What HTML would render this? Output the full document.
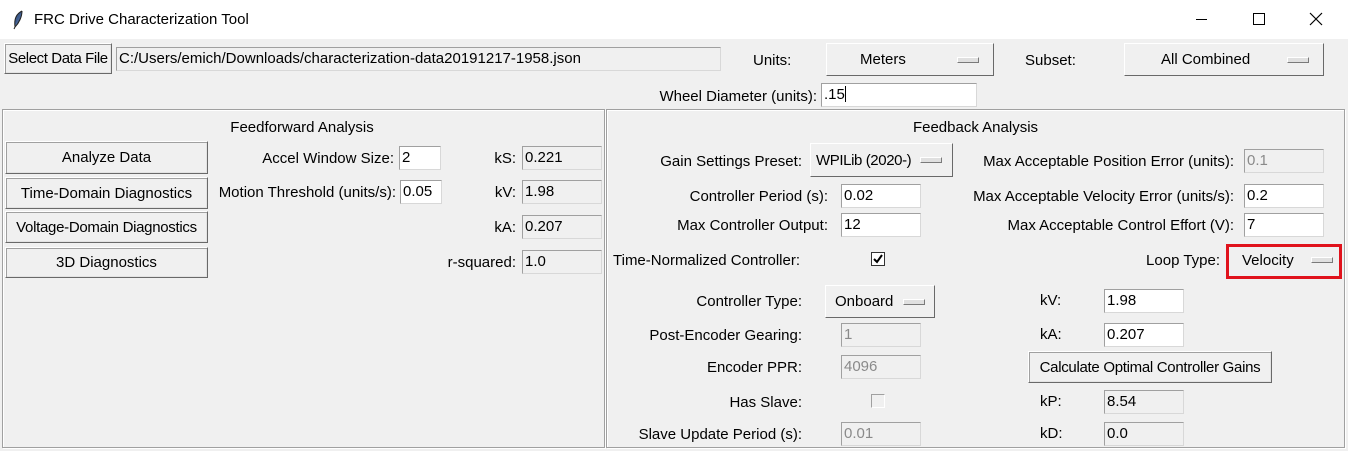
<!DOCTYPE html>
<html><head><meta charset="utf-8"><style>
*{box-sizing:border-box;margin:0;padding:0}
body{width:1348px;height:451px;background:#f0f0f0;font-family:"Liberation Sans",sans-serif;font-size:15px;color:#000;position:relative;overflow:hidden;letter-spacing:0}
.a{position:absolute;white-space:nowrap}
.r{position:absolute;white-space:nowrap;text-align:right;line-height:22px}
.e{position:absolute;background:#fff;border:1px solid #d8d8d8;border-top-color:#a0a0a0;border-left-color:#a0a0a0;line-height:22px;padding-left:2px;height:24px}
.d{background:#f0f0f0;color:#8a8a8a}
.b{position:absolute;background:#f0f0f0;border:1px solid;border-color:#fff #696969 #696969 #fff;box-shadow:1px 1px 0 #a0a0a0 inset, -1px -1px 0 #e3e3e3 inset;text-align:center}
.m{position:absolute;background:#f0f0f0;border:1px solid;border-color:#fff #696969 #696969 #fff;padding-left:12px}
.m i{position:absolute;right:14px;top:50%;width:22px;height:6px;margin-top:-3px;border:1px solid;border-color:#fff #7a7a7a #7a7a7a #fff;background:#e0e0e0}
.f{position:absolute;border:1px solid #a0a0a0;box-shadow:1px 1px 0 #fff inset,1px 1px 0 #fff}
.cb{position:absolute;width:14px;height:14px;background:#fff;border:1px solid #333}
</style></head><body>
<div class="a" style="left:0;top:0;width:1348px;height:39px;background:#fff"></div>
<svg class="a" style="left:12px;top:10px" width="12" height="20" viewBox="0 0 12 20"><path d="M10 1 C4 4 2 10 3 17 L2 19 M3 17 C7 13 10 7 10 1" fill="#3c5a8c" stroke="#222" stroke-width="1"/></svg>
<div class="a" style="left:34px;top:11px;font-size:15px">FRC Drive Characterization Tool</div>
<div class="a" style="left:1196px;top:19px;width:11px;height:1px;background:#000"></div>
<div class="a" style="left:1253px;top:13px;width:12px;height:12px;border:1px solid #000"></div>
<svg class="a" style="left:1309px;top:12px" width="14" height="14"><path d="M1 1L13 13M13 1L1 13" stroke="#000" stroke-width="1.2"/></svg>

<div class="b" style="left:4px;top:43px;width:108px;height:31px;line-height:30px;letter-spacing:-0.4px">Select Data File</div>
<div class="e d" style="left:116px;top:47px;width:605px;color:#000;background:#f0f0f0">C:/Users/emich/Downloads/characterization-data20191217-1958.json</div>
<div class="a" style="left:753px;top:52px">Units:</div>
<div class="m" style="left:826px;top:43px;width:168px;height:33px;line-height:32px;padding-left:33px">Meters<i></i></div>
<div class="a" style="left:1025px;top:52px">Subset:</div>
<div class="m" style="left:1124px;top:43px;width:200px;height:33px;line-height:32px;padding-left:36px">All Combined<i></i></div>
<div class="r" style="left:560px;width:257px;top:86px">Wheel Diameter (units):</div>
<div class="e" style="left:821px;top:83px;width:156px">.15<span style="display:inline-block;width:1px;height:16px;background:#000;vertical-align:-3px"></span></div>

<div class="f" style="left:2px;top:109px;width:603px;height:339px"></div>
<div class="f" style="left:606px;top:109px;width:739px;height:339px"></div>

<div class="a" style="left:0;width:604px;text-align:center;top:119px">Feedforward Analysis</div>
<div class="b" style="left:5px;top:141px;width:203px;height:33px;line-height:32px">Analyze Data</div>
<div class="b" style="left:5px;top:177px;width:203px;height:32px;line-height:31px">Time-Domain Diagnostics</div>
<div class="b" style="left:5px;top:211px;width:203px;height:32px;line-height:31px;letter-spacing:-0.3px">Voltage-Domain Diagnostics</div>
<div class="b" style="left:5px;top:247px;width:203px;height:31px;line-height:30px">3D Diagnostics</div>
<div class="r" style="left:200px;width:194px;top:148px">Accel Window Size:</div>
<div class="e" style="left:399px;top:146px;width:42px">2</div>
<div class="r" style="left:200px;width:196px;top:182px">Motion Threshold (units/s):</div>
<div class="e" style="left:400px;top:180px;width:42px">0.05</div>
<div class="r" style="left:440px;width:76px;top:148px">kS:</div>
<div class="e d" style="left:522px;top:146px;width:80px;color:#000">0.221</div>
<div class="r" style="left:440px;width:76px;top:182px">kV:</div>
<div class="e d" style="left:522px;top:180px;width:80px;color:#000">1.98</div>
<div class="r" style="left:440px;width:76px;top:217px">kA:</div>
<div class="e d" style="left:522px;top:215px;width:80px;color:#000">0.207</div>
<div class="r" style="left:400px;width:116px;top:252px">r-squared:</div>
<div class="e d" style="left:522px;top:250px;width:80px;color:#000">1.0</div>

<div class="a" style="left:606px;width:739px;text-align:center;top:119px">Feedback Analysis</div>
<div class="r" style="left:600px;width:202px;top:151px">Gain Settings Preset:</div>
<div class="m" style="left:810px;top:143px;width:143px;height:34px;line-height:33px;padding-left:5px;letter-spacing:-0.4px">WPILib (2020-)<i style="right:10px"></i></div>
<div class="r" style="left:900px;width:334px;top:151px">Max Acceptable Position Error (units):</div>
<div class="e d" style="left:1244px;top:149px;width:80px">0.1</div>
<div class="r" style="left:600px;width:228px;top:186px">Controller Period (s):</div>
<div class="e" style="left:841px;top:184px;width:80px">0.02</div>
<div class="r" style="left:900px;width:334px;top:186px">Max Acceptable Velocity Error (units/s):</div>
<div class="e" style="left:1244px;top:184px;width:80px">0.2</div>
<div class="r" style="left:600px;width:228px;top:215px">Max Controller Output:</div>
<div class="e" style="left:841px;top:213px;width:80px">12</div>
<div class="r" style="left:900px;width:334px;top:215px">Max Acceptable Control Effort (V):</div>
<div class="e" style="left:1244px;top:213px;width:80px">7</div>
<div class="a" style="left:613px;top:252px">Time-Normalized Controller:</div>
<div class="cb" style="left:871px;top:252px"><svg width="12" height="12" style="position:absolute;left:0;top:0"><path d="M2 6L5 9L10 2" stroke="#000" stroke-width="2" fill="none"/></svg></div>
<div class="r" style="left:1100px;width:120px;top:250px">Loop Type:</div>
<div class="a" style="left:1226px;top:244px;width:116px;height:35px;border:3px solid #e0121c"></div>
<div class="a" style="left:1242px;top:252px">Velocity</div>
<div class="a" style="left:1311px;top:257px;width:22px;height:6px;border:1px solid;border-color:#fff #7a7a7a #7a7a7a #fff;background:#e0e0e0"></div>

<div class="r" style="left:600px;width:202px;top:291px">Controller Type:</div>
<div class="m" style="left:825px;top:285px;width:110px;height:33px;line-height:32px;padding-left:9px">Onboard<i style="right:9px"></i></div>
<div class="a" style="left:1040px;top:292px">kV:</div>
<div class="e" style="left:1104px;top:289px;width:80px">1.98</div>
<div class="r" style="left:600px;width:202px;top:325px">Post-Encoder Gearing:</div>
<div class="e d" style="left:841px;top:323px;width:80px">1</div>
<div class="a" style="left:1040px;top:326px">kA:</div>
<div class="e" style="left:1104px;top:323px;width:80px">0.207</div>
<div class="r" style="left:600px;width:202px;top:357px">Encoder PPR:</div>
<div class="e d" style="left:841px;top:355px;width:80px">4096</div>
<div class="b" style="left:1028px;top:351px;width:244px;height:32px;line-height:31px;letter-spacing:-0.3px">Calculate Optimal Controller Gains</div>
<div class="r" style="left:600px;width:202px;top:392px">Has Slave:</div>
<div class="cb" style="left:871px;top:394px;background:#f0f0f0;border-color:#a0a0a0 #fff #fff #a0a0a0"></div>
<div class="a" style="left:1040px;top:393px">kP:</div>
<div class="e d" style="left:1104px;top:390px;width:80px;color:#000">8.54</div>
<div class="r" style="left:600px;width:202px;top:424px">Slave Update Period (s):</div>
<div class="e d" style="left:841px;top:422px;width:80px">0.01</div>
<div class="a" style="left:1040px;top:425px">kD:</div>
<div class="e d" style="left:1104px;top:422px;width:80px;color:#000">0.0</div>
</body></html>
